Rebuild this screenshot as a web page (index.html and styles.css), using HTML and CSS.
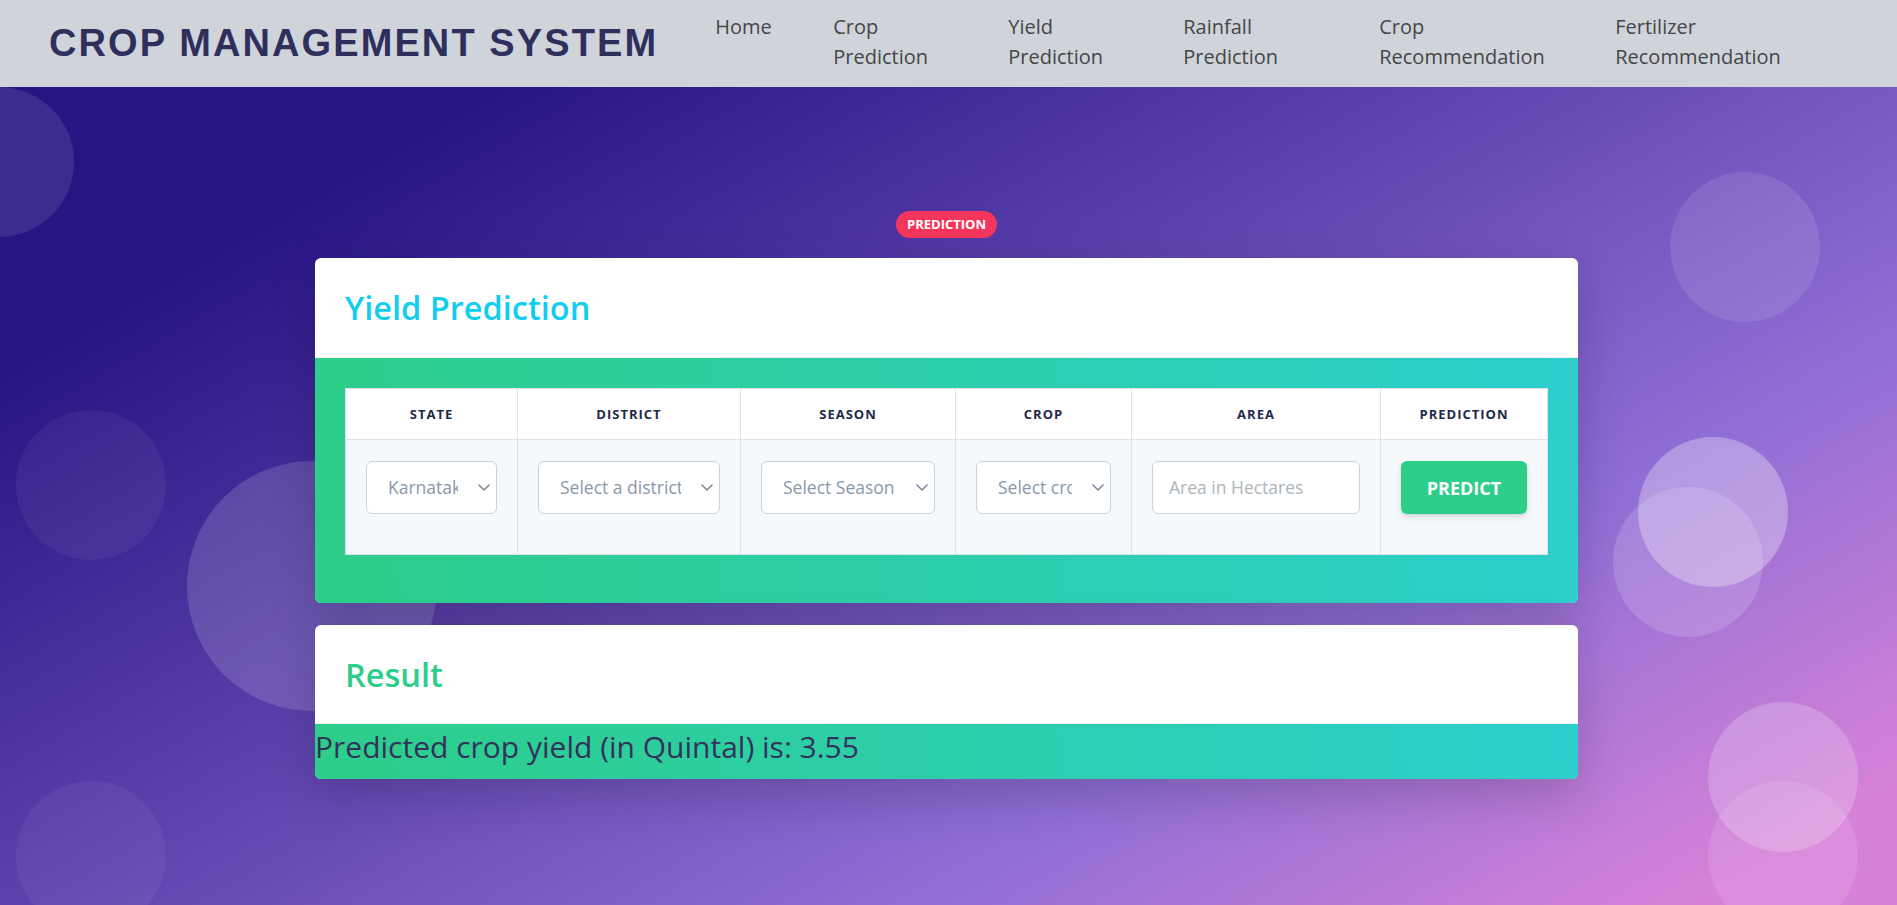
FILE: index.html
```html
<!DOCTYPE html>
<html lang="en">
<head>
<meta charset="utf-8">
<title>Crop Management System - Yield Prediction</title>
<link rel="stylesheet" href="styles.css">
</head>
<body>
<header class="topbar">
  <div class="brand">CROP MANAGEMENT SYSTEM</div>
  <nav class="menu">
    <a href="#">Home</a>
    <a href="#">Crop Prediction</a>
    <a href="#">Yield Prediction</a>
    <a href="#">Rainfall Prediction</a>
    <a href="#">Crop Recommendation</a>
    <a href="#">Fertilizer Recommendation</a>
  </nav>
</header>
<main class="hero">
  <div class="bubbles" aria-hidden="true">
    <span class="bub b1"></span>
    <span class="bub b2"></span>
    <span class="bub b3"></span>
    <span class="bub b4"></span>
    <span class="bub b5"></span>
    <span class="bub b6"></span>
    <span class="bub b7"></span>
    <span class="bub b8"></span>
    <span class="bub b9"></span>
  </div>
  <div class="wrap">
    <span class="badge">Prediction</span>
    <section class="card">
      <div class="card-head"><h2 class="title-info">Yield Prediction</h2></div>
      <div class="card-body">
        <table class="form-table">
          <colgroup>
            <col class="c-state"><col class="c-district"><col class="c-season"><col class="c-crop"><col class="c-area"><col class="c-pred">
          </colgroup>
          <thead>
            <tr><th>State</th><th>District</th><th>Season</th><th>Crop</th><th>Area</th><th>Prediction</th></tr>
          </thead>
          <tbody>
            <tr>
              <td><div class="sel"><select class="ctl"><option>Karnataka</option></select><svg class="chev" viewBox="0 0 12 7"><path d="M1 1l5 5 5-5"/></svg></div></td>
              <td><div class="sel"><select class="ctl"><option>Select a district</option></select><svg class="chev" viewBox="0 0 12 7"><path d="M1 1l5 5 5-5"/></svg></div></td>
              <td><div class="sel"><select class="ctl"><option>Select Season</option></select><svg class="chev" viewBox="0 0 12 7"><path d="M1 1l5 5 5-5"/></svg></div></td>
              <td><div class="sel"><select class="ctl"><option>Select crop</option></select><svg class="chev" viewBox="0 0 12 7"><path d="M1 1l5 5 5-5"/></svg></div></td>
              <td><input class="ctl" type="text" placeholder="Area in Hectares"></td>
              <td><button class="btn" type="button">Predict</button></td>
            </tr>
          </tbody>
        </table>
      </div>
    </section>
    <section class="card result">
      <div class="card-head short"><h2 class="title-success">Result</h2></div>
      <p class="result-text">Predicted crop yield (in Quintal) is: 3.55</p>
    </section>
  </div>
</main>
</body>
</html>
```
FILE: styles.css
```css
* { box-sizing: border-box; }
html, body { margin: 0; padding: 0; }
body {
  font-family: "Open Sans", "DejaVu Sans", sans-serif;
  background: #d782d9;
}

/* Top bar */
.topbar {
  height: 87px;
  background: #cfd4db;
  display: flex;
  align-items: center;
  padding-left: 49px;
}
.brand {
  font-family: "Liberation Sans", Arial, sans-serif;
  font-weight: 700;
  font-size: 38px;
  letter-spacing: 2.1px;
  color: #2f2f5e;
  margin-right: 57px;
  white-space: nowrap;
}
.menu {
  display: grid;
  grid-template-columns: 118px 175px 175px 196px 236px auto;
  align-items: start;
  margin-top: -3px;
}
.menu a {
  display: block;
  width: min-content;
  font-size: 20px;
  line-height: 30px;
  color: #464646;
  text-decoration: none;
}

/* Hero section */
.hero {
  position: relative;
  overflow: hidden;
  min-height: 818px;
  background: linear-gradient(150deg, #281483 15%, #8f6ed5 70%, #d782d9 94%);
}
.bubbles { position: absolute; inset: 0; }
.bub {
  position: absolute;
  width: 150px;
  height: 150px;
  border-radius: 50%;
}
.b1 { left: -76px; top: 0; background: rgba(255,255,255,.1); }
.b2 { left: 16px; top: 323px; background: rgba(255,255,255,.05); }
.b3 { left: 187px; top: 374px; width: 250px; height: 250px; background: rgba(255,255,255,.15); }
.b4 { left: 16px; top: 694px; background: rgba(255,255,255,.05); }
.b5 { right: 77px; top: 85px; background: rgba(255,255,255,.1); }
.b6 { right: 109px; top: 350px; background: rgba(255,255,255,.3); }
.b7 { right: 134px; top: 400px; background: rgba(255,255,255,.15); }
.b8 { right: 39px; top: 615px; background: rgba(255,255,255,.2); }
.b9 { right: 39px; top: 694px; background: rgba(255,255,255,.1); }

.wrap {
  position: relative;
  width: 1263px;
  margin: 0 0 0 calc(50% - 633.5px);
  padding-top: 124px;
  display: flex;
  flex-direction: column;
  align-items: center;
}

.badge {
  display: inline-block;
  height: 27px;
  line-height: 27px;
  padding: 0 11px;
  border-radius: 14px;
  background: #f5365c;
  color: #fff;
  font-size: 13px;
  font-weight: 700;
  text-transform: uppercase;
  margin-bottom: 20px;
}

.card {
  width: 100%;
  background: #fff;
  border-radius: 6px;
  overflow: hidden;
  box-shadow: 0 16px 48px rgba(0,0,0,.175);
}
.card-head {
  height: 100px;
  display: flex;
  align-items: center;
  padding-left: 30px;
  border-bottom: 1px solid rgba(0,0,0,.05);
}
.card-head.short { height: 99px; }
.card-head h2 {
  margin: 0;
  font-size: 32.5px;
  font-weight: 600;
  line-height: 1.2;
}
.title-info { color: #11cdef; }
.title-success { color: #2dce89; }

.card-body {
  background: linear-gradient(87deg, #2dce89 0, #2dcecc 100%);
  padding: 30px 30px 48px 30px;
}

/* Table */
.form-table {
  width: 1202px;
  table-layout: fixed;
  border-collapse: collapse;
}
.c-state { width: 172px; }
.c-district { width: 223px; }
.c-season { width: 215px; }
.c-crop { width: 176px; }
.c-area { width: 249px; }
.c-pred { width: 167px; }

.form-table th {
  height: 51px;
  padding: 0;
  background: #fff;
  border: 1px solid #dfe3e8;
  font-size: 13px;
  font-weight: 700;
  letter-spacing: 1px;
  text-transform: uppercase;
  color: #1e2a4c;
  text-align: center;
  vertical-align: middle;
}
.form-table td {
  padding: 21px 20px 40px 20px;
  background: #f6f9fc;
  border: 1px solid #dfe3e8;
  vertical-align: top;
}

.sel { position: relative; }
.chev {
  position: absolute;
  right: 7px;
  top: 50%;
  width: 12px;
  height: 7px;
  margin-top: -4px;
  pointer-events: none;
  fill: none;
  stroke: #7d8a9b;
  stroke-width: 1.6;
  stroke-linecap: round;
  stroke-linejoin: round;
}

.ctl {
  display: block;
  width: 100%;
  height: 53px;
  border: 1px solid #cad1d7;
  border-radius: 6px;
  background-color: #fff;
  font-family: "Open Sans", sans-serif;
  font-size: 17.5px;
  color: #8898aa;
  padding: 0 38px 2px 21px;
  outline: none;
}
select.ctl {
  -webkit-appearance: none;
  appearance: none;
}
input.ctl { padding: 0 16px 2px; }
input.ctl::placeholder { color: #adb5bd; }

.btn {
  display: block;
  width: 100%;
  height: 53px;
  border: 0;
  border-radius: 6px;
  background: #2dce89;
  color: #fff;
  font-family: "Open Sans", sans-serif;
  font-size: 18px;
  font-weight: 700;
  text-transform: uppercase;
  box-shadow: 0 4px 6px rgba(50,50,93,.11), 0 1px 3px rgba(0,0,0,.08);
  cursor: pointer;
}

/* Result */
.result { margin-top: 22px; }
.result-text {
  margin: 0;
  background: linear-gradient(87deg, #2dce89 0, #2dcecc 100%);
  font-size: 30px;
  line-height: 46px;
  padding-bottom: 9px;
  color: #32325d;
}
```
